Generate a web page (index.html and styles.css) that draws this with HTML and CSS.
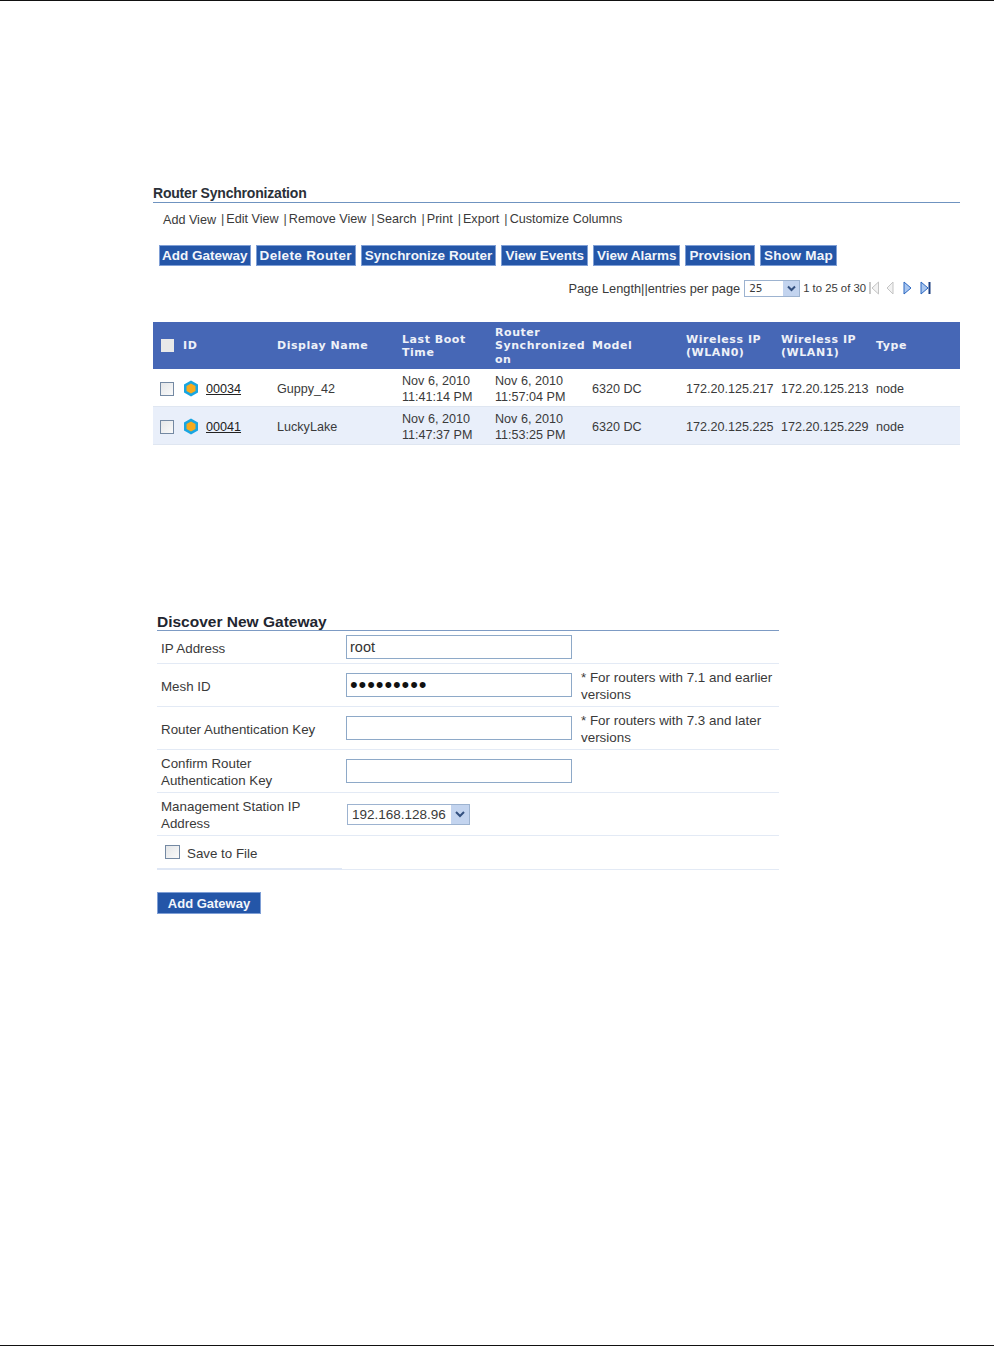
FILE: index.html
```html
<!DOCTYPE html>
<html lang="en">
<head>
<meta charset="utf-8">
<title>Router Synchronization</title>
<link rel="stylesheet" href="styles.css">
</head>
<body>
<div class="page">
  <section class="sync">
    <h2 class="sync-title">Router Synchronization</h2>
    <nav class="views">
      <a class="first">Add View</a><span class="sep">|</span><a>Edit View</a><span class="sep">|</span><a>Remove View</a><span class="sep">|</span><a>Search</a><span class="sep">|</span><a>Print</a><span class="sep">|</span><a>Export</a><span class="sep">|</span><a>Customize Columns</a>
    </nav>
    <div class="actions">
      <button class="btn btn-tight">Add Gateway</button>
      <button class="btn btn-wide">Delete Router</button>
      <button class="btn">Synchronize Router</button>
      <button class="btn">View Events</button>
      <button class="btn">View Alarms</button>
      <button class="btn">Provision</button>
      <button class="btn btn-loose">Show Map</button>
    </div>
    <div class="pager">
      <span class="pager-label">Page Length||entries per page</span>
      <div class="select select-small"><span class="select-value">25</span><span class="select-arrow"><svg width="9" height="7" viewBox="0 0 9 7"><path d="M1 1.5 4.5 5 8 1.5" fill="none" stroke="#33507f" stroke-width="2"/></svg></span></div>
      <span class="pager-count">1 to 25 of 30</span>
      <svg class="pager-icons" width="64" height="16" viewBox="0 0 64 16">
        <rect x="1" y="2" width="2" height="12" fill="#c8c8c8"/>
        <path d="M10.500 2 4 8l6.500 6z" fill="#f2f2f2" stroke="#c4c4c4"/>
        <path d="M25 2 19 8l6 6z" fill="#f2f2f2" stroke="#c4c4c4"/>
        <path d="M36 2l7 6-7 6z" fill="#a8c6f0" stroke="#2a66c0"/>
        <path d="M53 2l7 6-7 6z" fill="#a8c6f0" stroke="#2a66c0"/>
        <rect x="60.500" y="2" width="2" height="12" fill="#1c3f80"/>
      </svg>
    </div>
    <div class="grid">
      <div class="grid-row grid-head">
        <div class="cell cell-check"><span class="check check-head"></span></div>
        <div class="cell">ID</div>
        <div class="cell">Display Name</div>
        <div class="cell">Last Boot<br>Time</div>
        <div class="cell">Router<br>Synchronized<br>on</div>
        <div class="cell">Model</div>
        <div class="cell">Wireless IP<br>(WLAN0)</div>
        <div class="cell">Wireless IP<br>(WLAN1)</div>
        <div class="cell">Type</div>
      </div>
      <div class="grid-row">
        <div class="cell"><span class="check"></span></div>
        <div class="cell cell-id"><svg class="hex" width="16" height="17" viewBox="0 0 16 17"><path d="M8 .5 15 4.500v8L8 16.500 1 12.500v-8z" fill="#18a6e2"/><path d="M8 3.500l4.500 2.500v5L8 13.500 3.500 11V6z" fill="#f8aa1c"/></svg><a class="id-link">00034</a></div>
        <div class="cell">Guppy_42</div>
        <div class="cell">Nov 6, 2010<br>11:41:14 PM</div>
        <div class="cell">Nov 6, 2010<br>11:57:04 PM</div>
        <div class="cell">6320 DC</div>
        <div class="cell">172.20.125.217</div>
        <div class="cell">172.20.125.213</div>
        <div class="cell">node</div>
      </div>
      <div class="grid-row grid-row-alt">
        <div class="cell"><span class="check"></span></div>
        <div class="cell cell-id"><svg class="hex" width="16" height="17" viewBox="0 0 16 17"><path d="M8 .5 15 4.500v8L8 16.500 1 12.500v-8z" fill="#18a6e2"/><path d="M8 3.500l4.500 2.500v5L8 13.500 3.500 11V6z" fill="#f8aa1c"/></svg><a class="id-link">00041</a></div>
        <div class="cell">LuckyLake</div>
        <div class="cell">Nov 6, 2010<br>11:47:37 PM</div>
        <div class="cell">Nov 6, 2010<br>11:53:25 PM</div>
        <div class="cell">6320 DC</div>
        <div class="cell">172.20.125.225</div>
        <div class="cell">172.20.125.229</div>
        <div class="cell">node</div>
      </div>
    </div>
  </section>

  <section class="discover">
    <h2 class="discover-title">Discover New Gateway</h2>
    <div class="form-row form-row-short">
      <label class="form-label">IP Address</label>
      <input class="field" type="text" value="root">
      <span></span>
    </div>
    <div class="form-row">
      <label class="form-label">Mesh ID</label>
      <input class="field field-secret" type="password" value="123456789">
      <span class="form-note">* For routers with 7.1 and earlier versions</span>
    </div>
    <div class="form-row">
      <label class="form-label">Router Authentication Key</label>
      <input class="field" type="text">
      <span class="form-note">* For routers with 7.3 and later versions</span>
    </div>
    <div class="form-row">
      <label class="form-label">Confirm Router<br>Authentication Key</label>
      <input class="field" type="text">
      <span></span>
    </div>
    <div class="form-row">
      <label class="form-label">Management Station IP<br>Address</label>
      <div class="select select-wide"><span class="select-value">192.168.128.96</span><span class="select-arrow"><svg width="10" height="8" viewBox="0 0 10 8"><path d="M1 2l4 4 4-4" fill="none" stroke="#33507f" stroke-width="2"/></svg></span></div>
      <span></span>
    </div>
    <div class="form-row form-row-save">
      <label class="save-label"><span class="check check-save"></span>Save to File</label>
    </div>
    <button class="btn btn-add">Add Gateway</button>
  </section>
</div>
</body>
</html>
```
FILE: styles.css
```css
* { box-sizing: border-box; }
html, body { margin: 0; padding: 0; background: #fff; }
body { font-family: "Liberation Sans", Arial, sans-serif; font-size: 12.6px; color: #3a3a3a; }
.page {
  height: 1346px;
  border-top: 1px solid #111;
  border-bottom: 1px solid #111;
  overflow: hidden;
}
.sync { margin: 184px 34px 0 153px; }
.sync-title {
  margin: 0;
  font-size: 14px;
  letter-spacing: -.2px;
  line-height: 16px;
  height: 18px;
  font-weight: bold;
  color: #2a3038;
  border-bottom: 1px solid #6f93c0;
}
.views {
  display: flex;
  align-items: center;
  height: 16px;
  margin: 8px 0 0 10px;
}
.views a { white-space: nowrap; }
.views .sep { margin: 0 2px 0 5px; color: #444; }
.views .first { position: relative; top: 1px; }
.actions { display: flex; gap: 5px; margin: 18px 0 0 6px; }
.btn {
  height: 21px;
  padding: 0 3px;
  border: 1px solid #7f9fd6;
  background: #2456a8;
  color: #f2f5fb;
  font-family: "Liberation Sans", Arial, sans-serif;
  font-size: 13.500px;
  font-weight: bold;
  white-space: nowrap;
}
.btn-tight { padding: 0 2px; }
.btn-wide { letter-spacing: .35px; }
.btn-loose { letter-spacing: .3px; }
.pager {
  display: flex;
  align-items: center;
  justify-content: flex-end;
  height: 18px;
  margin: 13px 28px 0 0;
}
.pager-label { font-size: 12.800px; }
.select {
  display: flex;
  align-items: center;
  background: #fff;
  border: 1px solid #9db3d0;
}
.select-value { flex: 1; padding-left: 4px; }
.select-arrow {
  display: flex;
  align-items: center;
  justify-content: center;
  background: #c3d4ef;
}
.select-small { width: 56px; height: 17px; margin: 0 3px 0 4px; }
.select-small .select-value { font-family: "DejaVu Sans", sans-serif; font-size: 10.500px; }
.select-small .select-arrow { width: 16px; height: 15px; }
.select-wide { width: 123px; height: 21px; margin-left: 1px; }
.select-wide .select-value { font-size: 13.500px; padding: 1px 0 0 4px; white-space: nowrap; }
.select-wide .select-arrow { width: 18px; height: 19px; }
.pager-count { font-size: 11.300px; margin-right: 2px; }
.pager-icons { flex: none; }
.grid { margin-top: 25px; }
.grid-row {
  display: grid;
  grid-template-columns: 30px 94px 125px 93px 97px 94px 95px 95px 84px;
  height: 38px;
  border-bottom: 1px solid #dfe6f1;
}
.grid-row-alt { background: #e9effa; }
.grid-head {
  height: 47px;
  background: #4667b6;
  color: #eef1f8;
  font-family: "DejaVu Sans", sans-serif;
  font-size: 11px;
  font-weight: bold;
  letter-spacing: .55px;
  line-height: 13.500px;
  border-bottom: 0;
}
.cell {
  display: flex;
  flex-direction: column;
  justify-content: center;
  padding-top: 2px;
  line-height: 16px;
  white-space: nowrap;
}
.grid-head .cell { line-height: 13.500px; display: block; align-self: center; padding-top: 1px; }
.grid-head .cell-check { padding-top: 0; }
.cell-id { flex-direction: row; justify-content: flex-start; align-items: center; }
.check {
  display: inline-block;
  width: 14px;
  height: 14px;
  margin-left: 7px;
  border: 1px solid #7489a3;
  background: linear-gradient(135deg, #e4e6e8, #fafafa);
}
.check-head { display: block; width: 13px; height: 13px; margin-left: 8px; border: 0; background: #e9e9e9; }
.hex { flex: none; margin-right: 7px; }
.id-link { text-decoration: underline; color: #222; }
.discover { width: 622px; margin: 169px 0 0 157px; }
.discover-title {
  margin: 0;
  height: 17px;
  font-size: 15.500px;
  line-height: 15px;
  font-weight: bold;
  color: #1f2630;
  border-bottom: 1px solid #7d9bc4;
}
.form-row {
  display: grid;
  grid-template-columns: 189px 234px 1fr;
  align-items: center;
  height: 43px;
  border-bottom: 1px solid #e3eaf5;
}
.form-row-short { height: 33px; }
.form-label { padding: 2px 0 0 4px; font-size: 13.350px; line-height: 17px; white-space: nowrap; }
.form-note { padding: 2px 0 0 1px; line-height: 17px; width: 199px; font-size: 13.400px; }
.field {
  display: block;
  width: 226px;
  height: 24px;
  padding: 0 3px;
  border: 1px solid #8ea9c8;
  background: #fff;
  font-family: "Liberation Sans", Arial, sans-serif;
  font-size: 14.500px;
  color: #333;
  outline: 0;
}
.field-secret { font-size: 22px; letter-spacing: .9px; color: #111; }
.form-row-save {
  display: block;
  position: relative;
  height: 34px;
}
.form-row-save::after {
  content: "";
  position: absolute;
  left: 0;
  bottom: -1px;
  width: 185px;
  height: 2px;
  background: #dfe7f5;
}
.save-label { display: flex; align-items: center; height: 100%; padding: 2px 0 0 8px; font-size: 13.350px; }
.check-save { width: 15px; height: 14px; margin: -4px 7px 0 0; }
.btn-add { display: block; width: 104px; height: 22px; margin-top: 22px; padding: 0; font-size: 13px; }
```
